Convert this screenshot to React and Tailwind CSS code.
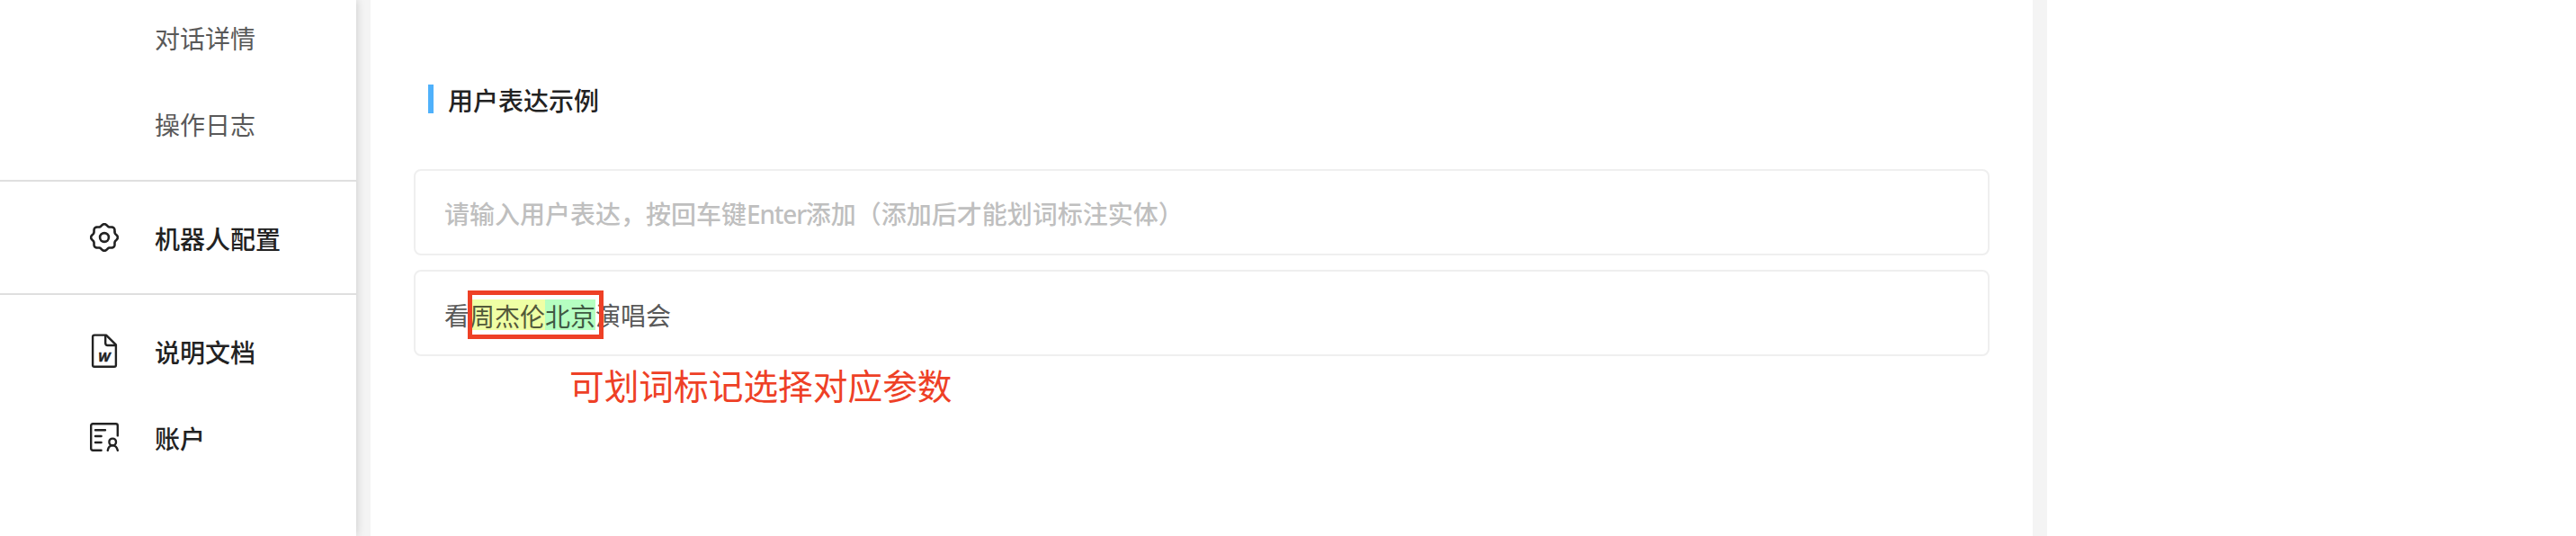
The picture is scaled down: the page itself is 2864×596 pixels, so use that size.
const GEAR_PATH =
  Array.from({ length: 144 }, (_, i) => {
    const a = (i / 144) * Math.PI * 2;
    const r = 13.8 + 1.1 * Math.cos(8 * a);
    return `${i ? "L" : "M"}${(16 + r * Math.sin(a)).toFixed(2)} ${(16 - r * Math.cos(a)).toFixed(2)}`;
  }).join("") + "Z";

function GearIcon() {
  return (
    <svg className="h-8 w-8" viewBox="0 0 32 32" fill="none" stroke="#222" strokeWidth="2.6" strokeLinejoin="round">
      <path d={GEAR_PATH} />
      <circle cx="16" cy="16" r="4.9" />
    </svg>
  );
}

function WordFileIcon() {
  return (
    <svg className="h-[38px] w-8" viewBox="0 0 32 38" fill="none" stroke="#222" strokeWidth="2.4" strokeLinejoin="round">
      <path d="M18 1.6H5C3.8 1.6 3.1 2.3 3.1 3.4V35C3.1 36.1 3.8 36.8 5 36.8H27C28.2 36.8 28.9 36.1 28.9 35V12.4Z" />
      <path d="M17.2 1.6V10.6C17.2 12.2 18 13 19.6 13H28.9" />
      <text x="15.6" y="30.6" textAnchor="middle" fill="#222" stroke="#222" strokeWidth="0.4" className="font-['Open_Sans',sans-serif] text-[15px] font-bold italic">W</text>
    </svg>
  );
}

function AccountIcon() {
  return (
    <svg className="h-8 w-8" viewBox="0 0 32 32" fill="none" stroke="#222" strokeWidth="2.4" strokeLinecap="round" strokeLinejoin="round">
      <path d="M12.6 30.8H3.2C2 30.8 1.2 30 1.2 28.8V3.2C1.2 2 2 1.2 3.2 1.2H28.8C30 1.2 30.8 2 30.8 3.2V14.4" />
      <path d="M6 8.2H17M6 15H12.6M6 22H12.6" />
      <circle cx="25.2" cy="21.4" r="3.8" />
      <path d="M19.8 30.8C20.4 27.4 22.2 25.4 25.2 25.4S30 27.4 30.8 30.8" />
    </svg>
  );
}

function SubItem({ children }) {
  return <div className="flex h-24 items-center pl-[172px] text-[#595959]">{children}</div>;
}

function NavItem({ icon, children }) {
  return (
    <div className="flex h-24 items-center pl-[100px] font-medium text-[#222]">
      <span className="flex w-[72px]">{icon}</span>
      <span className="pt-0.5">{children}</span>
    </div>
  );
}

export default function App() {
  return (
    <div className="flex h-[596px] w-[2864px] overflow-hidden bg-white font-['Noto_Sans_CJK_SC',sans-serif] text-[28px] leading-10">
      <aside className="z-10 flex w-[396px] shrink-0 flex-col bg-white shadow-[0_0_10px_rgba(0,0,0,0.18)]">
        <div className="-mt-1.5 flex h-[206px] shrink-0 flex-col">
          <SubItem>对话详情</SubItem>
          <SubItem>操作日志</SubItem>
        </div>
        <div className="flex h-32 shrink-0 flex-col border-y-2 border-[#dfdfdf] pt-3.5">
          <NavItem icon={<GearIcon />}>机器人配置</NavItem>
        </div>
        <div className="pt-3.5">
          <NavItem icon={<WordFileIcon />}>说明文档</NavItem>
          <NavItem icon={<AccountIcon />}>账户</NavItem>
        </div>
      </aside>

      <main className="flex w-[1880px] shrink-0 flex-col border-x-[16px] border-[#f4f4f4] px-12 pt-[90px]">
        <h2 className="flex h-10 items-center gap-4 pl-4 font-medium text-[#222]">
          <span className="h-8 w-1.5 bg-[#4fb1fb]" />
          <span className="pt-0.5">用户表达示例</span>
        </h2>
        <div className="mt-[58px] flex h-24 items-center rounded-lg border-2 border-[#efefef] px-8 pt-0.5 font-medium text-[#bfbfbf]">
          <span>
            请输入用户表达，按回车键
            <span className="font-['Noto_Sans',sans-serif] tracking-[-1.2px]">Enter</span>
            添加（添加后才能划词标注实体）
          </span>
        </div>
        <div className="mt-4 flex h-24 items-center rounded-lg border-2 border-[#efefef] px-8 pt-1 text-[#595959]">
          <span>看</span>
          <span className="relative flex leading-[34px]">
            <span className="-mt-px h-[34px] bg-[#efffa5] leading-9 text-[#53593a]">周杰伦</span>
            <span className="-mt-px h-[34px] bg-[#b5ffc1] leading-9 text-[#3f5943]">北京</span>
            <span className="absolute -top-[11px] -left-[2px] h-[54px] w-[151px] border-[5px] border-[#ee4026]" />
          </span>
          <span>演唱会</span>
        </div>
        <p className="mt-[9px] pl-[173px] text-[38.7px] leading-[44px] text-[#ee4026]">可划词标记选择对应参数</p>
      </main>
    </div>
  );
}
